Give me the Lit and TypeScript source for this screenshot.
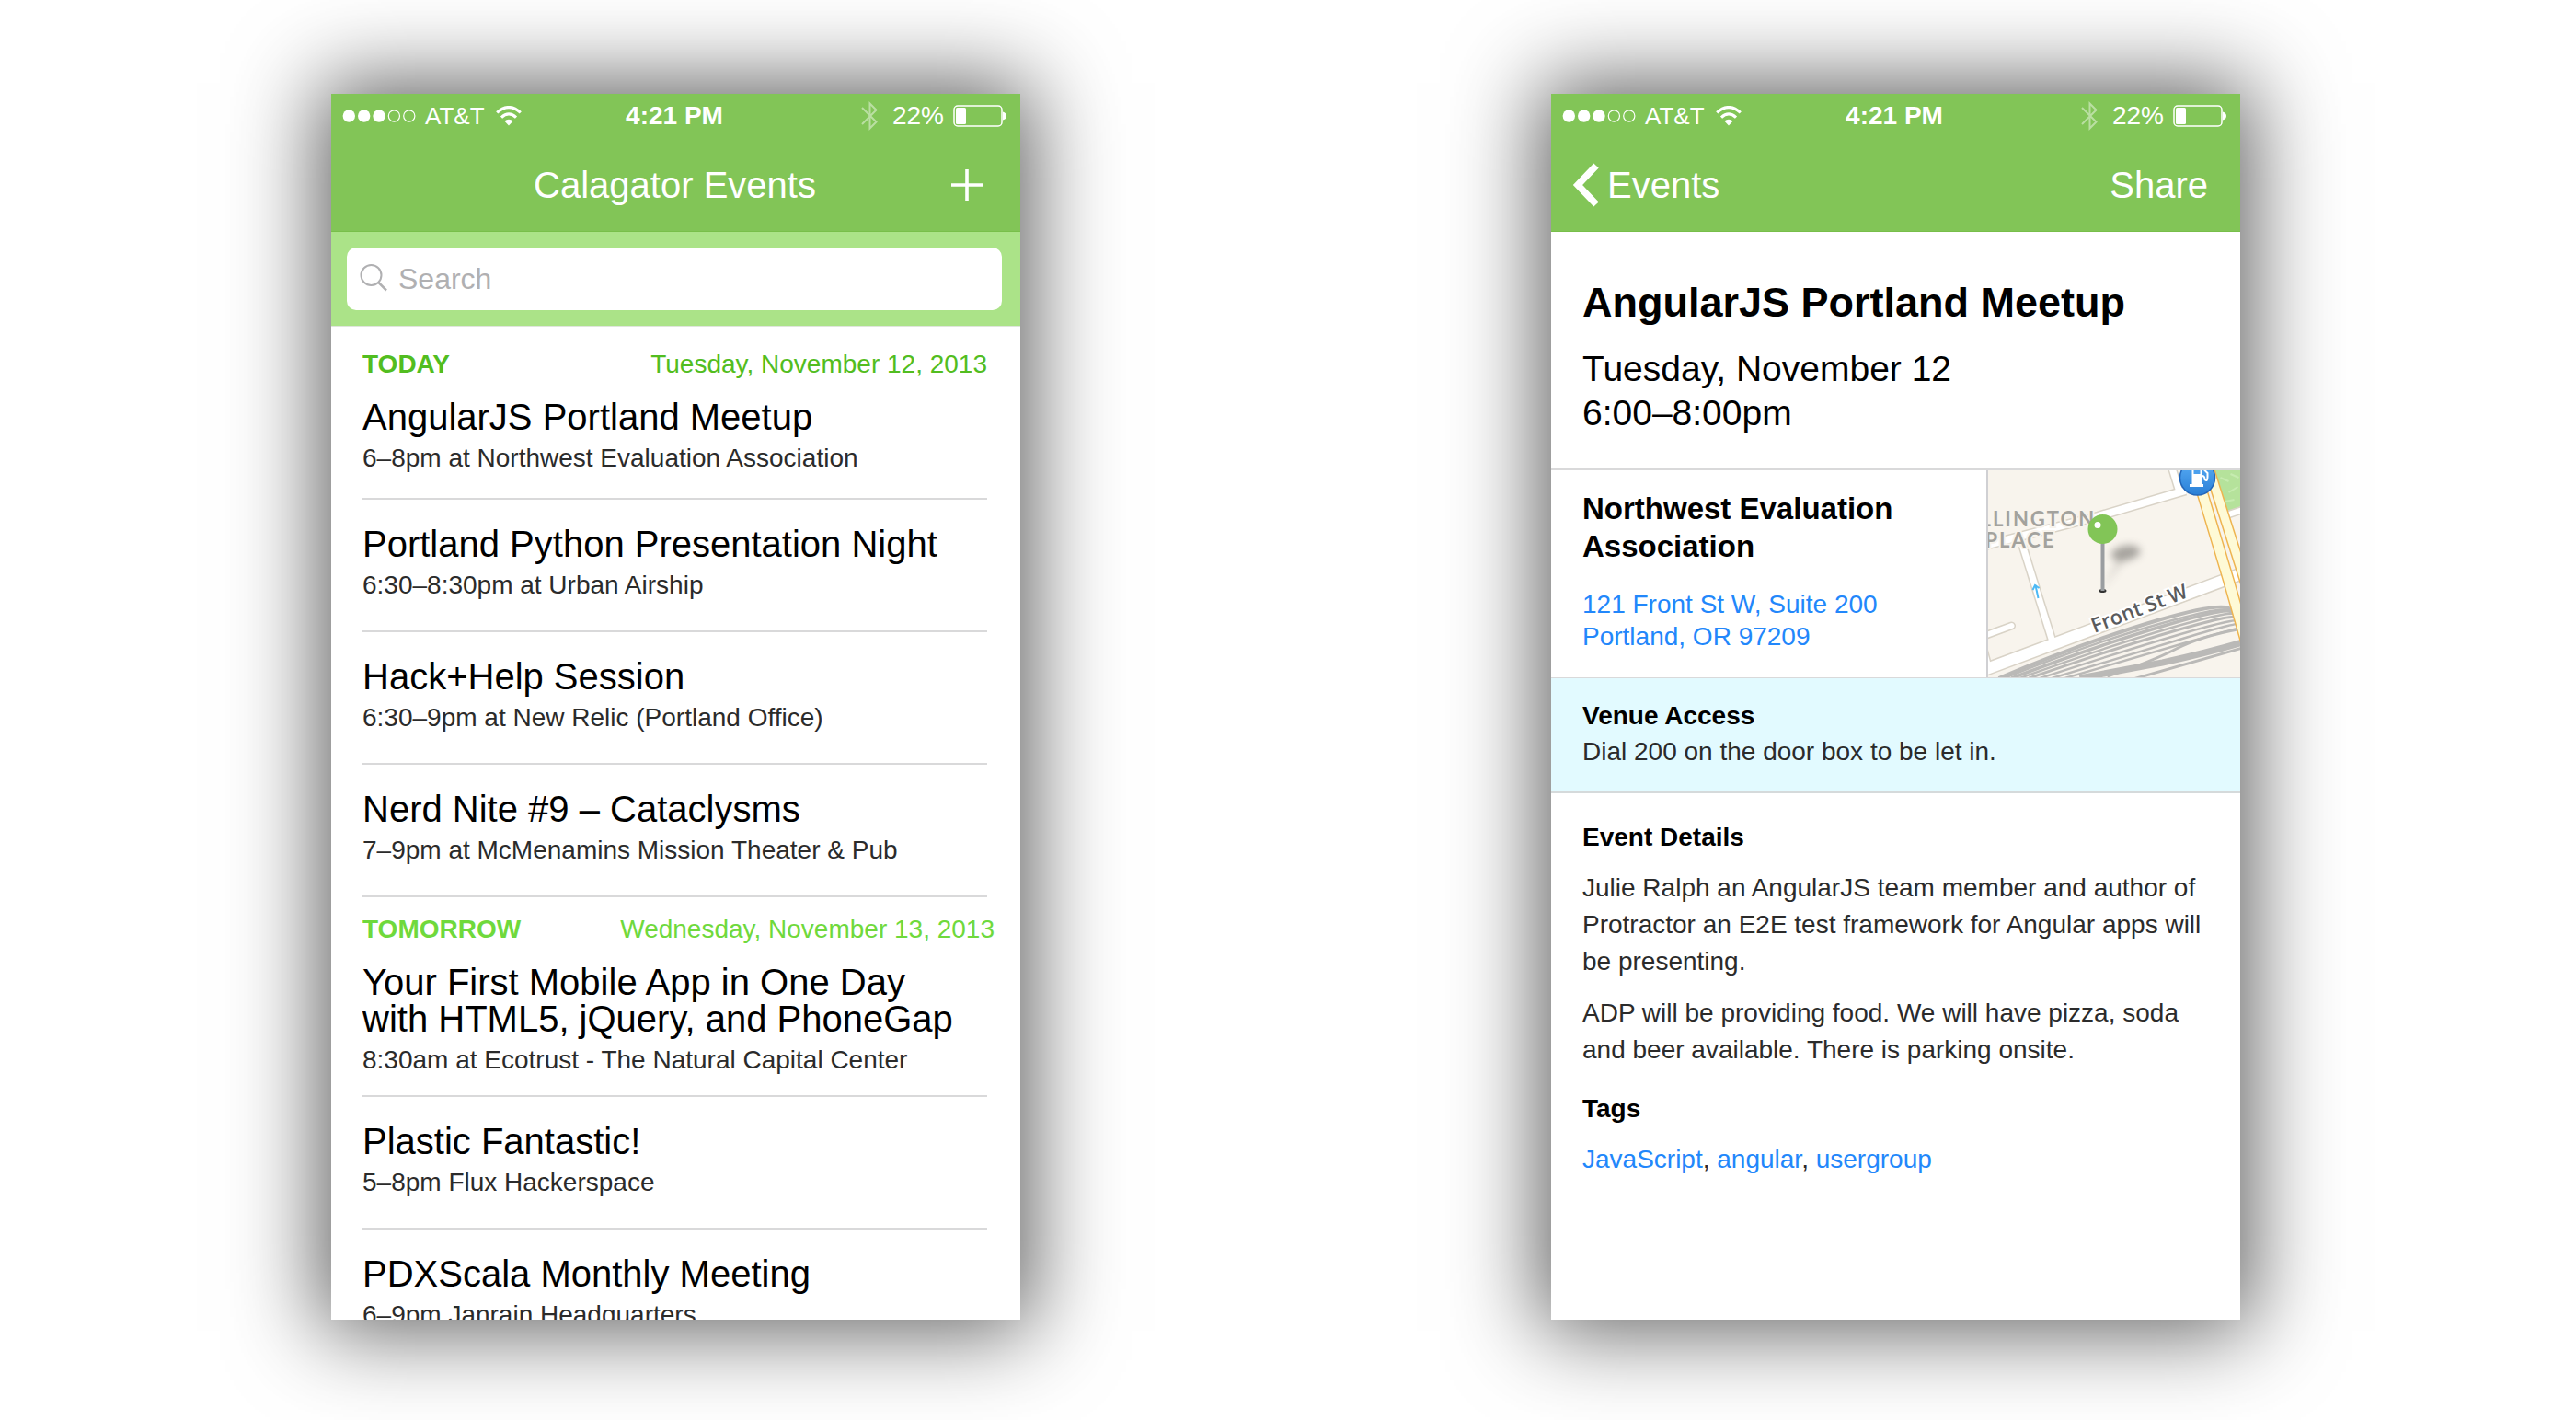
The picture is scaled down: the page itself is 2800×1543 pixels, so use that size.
import { LitElement, html, svg, css } from "lit";
import { customElement } from "lit/decorators.js";

interface EventItem {
  title: string[];
  meta: string;
}

interface Day {
  label: string;
  date: string;
  later: boolean;
  events: EventItem[];
}

const DAYS: Day[] = [
  {
    label: "TODAY",
    date: "Tuesday, November 12, 2013",
    later: false,
    events: [
      { title: ["AngularJS Portland Meetup"], meta: "6–8pm at Northwest Evaluation Association" },
      { title: ["Portland Python Presentation Night"], meta: "6:30–8:30pm at Urban Airship" },
      { title: ["Hack+Help Session"], meta: "6:30–9pm at New Relic (Portland Office)" },
      { title: ["Nerd Nite #9 – Cataclysms"], meta: "7–9pm at McMenamins Mission Theater & Pub" },
    ],
  },
  {
    label: "TOMORROW",
    date: "Wednesday, November 13, 2013",
    later: true,
    events: [
      {
        title: ["Your First Mobile App in One Day", "with HTML5, jQuery, and PhoneGap"],
        meta: "8:30am at Ecotrust - The Natural Capital Center",
      },
      { title: ["Plastic Fantastic!"], meta: "5–8pm Flux Hackerspace" },
      { title: ["PDXScala Monthly Meeting"], meta: "6–9pm Janrain Headquarters" },
    ],
  },
];

@customElement("status-bar")
class StatusBar extends LitElement {
  static styles = css`
    :host { display: block; color: #fff; }
    .bar { display: grid; grid-template-columns: 1fr auto 1fr; align-items: center; height: 48px; padding: 0 15px 0 12px; font-size: 26px; line-height: 32px; }
    .side { display: flex; align-items: center; gap: 10px; }
    .right { justify-content: flex-end; }
    .time { font-size: 28px; font-weight: 700; }
    .percent { font-size: 28px; }
    .bluetooth { margin-right: 6px; }
    svg { display: block; flex: none; }
  `;
  render() {
    return html`<div class="bar">
      <div class="side">
        <svg width="80" height="16" viewBox="0 0 80 16" fill="#fff" stroke="#fff">
          ${[7.3, 23.7, 40, 56.4, 72.8].map((x, i) =>
            i < 3 ? svg`<circle cx=${x} cy="8" r="6.7" stroke="none" />` : svg`<circle cx=${x} cy="8" r="6.1" fill="none" stroke-width="1.2" />`)}
        </svg>
        <span>AT&amp;T</span>
        <svg width="30" height="22" viewBox="0 0 30 22" fill="none" stroke="#fff" stroke-width="3.2">
          <path d="M3.200 7.400Q16-4.200 28.800 7.400" /><path d="M8 12.600Q16 5.200 24 12.600" />
          <path d="M16 21.500L11.300 16.600Q16 12.800 20.700 16.600Z" fill="#fff" stroke="none" />
        </svg>
      </div>
      <span class="time">4:21 PM</span>
      <div class="side right">
        <svg class="bluetooth" width="18" height="32" viewBox="0 0 18 32" fill="none" stroke="#fff" stroke-opacity=".45" stroke-width="2">
          <path d="M1 7L16.500 22.500 9.500 29.500V2.500L16.500 9.500 1 25" />
        </svg>
        <span class="percent">22%</span>
        <svg width="58" height="24" viewBox="0 0 58 24">
          <rect x="1" y="1" width="52" height="22" rx="4" fill="none" stroke="#fff" stroke-width="1.5" />
          <rect x="3" y="3" width="11" height="18" rx="1.5" fill="#fff" />
          <path d="M54 7.500Q58 8.500 58 12T54 16.500Z" fill="#fff" />
        </svg>
      </div>
    </div>`;
  }
}

@customElement("events-screen")
class EventsScreen extends LitElement {
  static styles = css`
    :host { display: block; }
    .top { background: #82c557; border-bottom: 1px solid #78bf4a; color: #fff; }
    .nav { display: grid; grid-template-columns: 1fr auto 1fr; align-items: center; height: 101px; padding: 0 38px 0 36px; box-sizing: border-box; }
    h1 { grid-column: 2; margin: 0; font-size: 40px; line-height: 48px; font-weight: 400; }
    .add { justify-self: end; border: 0; padding: 0; background: none; color: inherit; display: flex; }
    .search { background: #abe388; padding: 17px 20px 17px 17px; border-bottom: 1px solid #dfe5dc; }
    .field { display: flex; align-items: center; gap: 10px; background: #fff; border-radius: 10px; height: 68px; padding: 0 14px; }
    input { flex: 1; min-width: 0; border: 0; outline: 0; padding: 0; background: none; font: inherit; font-size: 32px; line-height: 40px; color: #333; }
    input::placeholder { color: #b0b0b2; opacity: 1; }
    .list { padding: 0 36px 0 34px; }
    .day { display: flex; justify-content: space-between; align-items: baseline; padding-top: 24px; line-height: 34px; color: #52bd20; white-space: nowrap; }
    .day.later { padding-top: 18px; color: #6fd93c; margin-right: -8px; }
    .day h2 { margin: 0; font-size: 28px; line-height: 34px; font-weight: 700; }
    .date { font-size: 28px; }
    .events { list-style: none; margin: 0; padding: 0; }
    .event { border-bottom: 2px solid #d9d9da; padding: 28px 0 29px; }
    .event.first { padding: 20px 0 23px; }
    .events.later .event.first { padding-bottom: 18px; }
    .title { margin: 0 0 5px; font-size: 40px; line-height: 40px; font-weight: 400; color: #000; white-space: nowrap; }
    .title span { display: block; }
    .meta { margin: 0; font-size: 28px; line-height: 40px; color: #2b2b2b; white-space: nowrap; }
    svg { display: block; flex: none; }
  `;
  render() {
    return html`
      <header class="top">
        <status-bar></status-bar>
        <div class="nav">
          <h1>Calagator Events</h1>
          <button class="add" aria-label="Add event">
            <svg width="40" height="40" viewBox="0 0 40 40" stroke="#fff" stroke-width="3.6"><path d="M20 3V37M3 20H37" /></svg>
          </button>
        </div>
      </header>
      <div class="search">
        <label class="field">
          <svg width="32" height="32" viewBox="0 0 32 32" fill="none" stroke="#b0b0b2" stroke-width="2"><circle cx="12.500" cy="12" r="11" /><path d="M20.500 20L29 28.500" stroke-width="2.500" /></svg>
          <input type="search" placeholder="Search" aria-label="Search" />
        </label>
      </div>
      <div class="list">
        ${DAYS.map((d) => html`
          <div class="day ${d.later ? "later" : ""}"><h2>${d.label}</h2><span class="date">${d.date}</span></div>
          <ul class="events ${d.later ? "later" : ""}">
            ${d.events.map((e, i) => html`<li class="event ${i === 0 ? "first" : ""}">
              <h3 class="title">${e.title.map((t) => html`<span>${t}</span>`)}</h3>
              <p class="meta">${e.meta}</p>
            </li>`)}
          </ul>`)}
      </div>`;
  }
}

@customElement("venue-map")
class VenueMap extends LitElement {
  static styles = css`
    :host { display: block; }
    svg { display: block; width: 100%; height: 100%; }
    .place { font: 700 22px Lato, sans-serif; letter-spacing: 2px; fill: #a3a29d; stroke: #f8f4ed; stroke-width: 4px; paint-order: stroke; }
    .street { font: 600 22px "Open Sans", sans-serif; fill: #5a5b5d; stroke: #fff; stroke-width: 4px; paint-order: stroke; }
  `;
  render() {
    // Each road is drawn twice: a wide casing first, the white surface over it.
    const roads: [string, number, string][] = [
      ["M-4 82L120 50 215 22", 8, "butt"],
      ["M200-4L208 22", 7, "butt"],
      ["M38 82L71 188", 7, "butt"],
      ["M-4 180L26 169", 6, "round"],
      ["M-4 190L2 212", 3, "butt"],
      ["M-4 217L130 167 277 112", 12, "butt"],
      ["M256 50L280 42", 6, "butt"],
    ];
    return html`<svg viewBox="0 0 275 225" preserveAspectRatio="xMidYMid slice" role="img" aria-label="Map of Front St W">
      <defs>
        <linearGradient id="fuel" x2="0" y2="1"><stop offset="0" stop-color="#5aaef6" /><stop offset="1" stop-color="#2a7fd6" /></linearGradient>
        <filter id="soft" x="-50%" y="-50%" width="200%" height="200%"><feGaussianBlur stdDeviation="4" /></filter>
      </defs>
      <rect width="275" height="225" fill="#f8f4ed" />
      <path d="M246-2H277V40L258 45Z" fill="#b5e29b" />
      <path d="M253 8L262 12M262 24L272 18M258 34L268 32M264 4L273 8" stroke="#c6ebb0" stroke-width="2" />
      <g fill="none" stroke="#bab9b7" stroke-width="2.400">
        <path d="M12 226Q110 185 185 163T265 152" stroke-width="4" />
        <path d="M18 226Q115 187 190 166T265 154" />
        <path d="M26 226Q120 190 195 168T265 156" stroke-width="3.500" />
        <path d="M35 226Q128 192 200 171T270 158" />
        <path d="M45 226Q136 194 205 174T270 161" stroke-width="3" />
        <path d="M57 226Q145 197 210 178T275 164" />
        <path d="M70 226Q155 200 215 182T275 167" />
        <path d="M84 226Q165 202 220 186T277 171" />
        <path d="M100 226L190 209Q240 198 277 187" stroke-width="7" />
        <path d="M130 224Q178 208 205 194T277 172" stroke-width="3" />
        <path d="M158 227L277 193" stroke-width="3" />
      </g>
      <g fill="none" stroke="#d9d3c7">
        ${roads.map(([d, w, cap]) => svg`<path d=${d} stroke-width=${w + 3} stroke-linecap=${cap} />`)}
      </g>
      <g fill="none" stroke="#fff">
        ${roads.map(([d, w, cap]) => svg`<path d=${d} stroke-width=${w} stroke-linecap=${cap} />`)}
      </g>
      <g fill="none">
        <path d="M226 0L262 120 282 190" stroke="#eeb450" stroke-width="13" /><path d="M240-4L268 84 282 128" stroke="#eeb450" stroke-width="12" />
        <path d="M226 0L262 120 282 190" stroke="#fefad6" stroke-width="10" /><path d="M240-4L268 84 282 128" stroke="#fefad6" stroke-width="9" />
      </g>
      <path d="M52 125L55 139M49 130L51.500 125 56 128" stroke="#4db9f5" stroke-width="2" fill="none" />
      <text class="place" x="-8" y="61">LLINGTON</text>
      <text class="place" x="-3" y="84">PLACE</text>
      <text class="street" transform="translate(116 177) rotate(-21)">Front St W</text>
      <circle cx="228" cy="8" r="19" fill="url(#fuel)" stroke="#2266ba" stroke-width="1.500" />
      <path d="M222-6H233V15H234.500V18H219.500V15H222Z" fill="#fff" />
      <rect x="224" y="0" width="7" height="4" fill="#4ba0ee" />
      <path d="M233 6Q236 6 236 10Q239 13 239 7V3L235-1" fill="none" stroke="#fff" stroke-width="2" />
      <g filter="url(#soft)" fill="#55534f" opacity=".5"><ellipse cx="150" cy="90" rx="16" ry="8" transform="rotate(-10 150 90)" /><path d="M125 129L143 95 148 98Z" opacity=".5" /></g>
      <ellipse cx="125" cy="131" rx="4" ry="2" fill="#333" />
      <path d="M125 78V131" stroke="#9a9da0" stroke-width="4" />
      <circle cx="125" cy="64" r="16" fill="#82c557" /><circle cx="119.500" cy="59.500" r="3.500" fill="#fff" />
    </svg>`;
  }
}

@customElement("detail-screen")
class DetailScreen extends LitElement {
  static styles = css`
    :host { display: block; color: #000; }
    .top { background: #82c557; border-bottom: 1px solid #78bf4a; color: #fff; }
    .nav { display: flex; justify-content: space-between; align-items: center; height: 101px; padding: 0 35px 0 23px; box-sizing: border-box; }
    .nav button, .nav a { display: flex; align-items: center; gap: 8px; border: 0; padding: 0; background: none; color: #fff; text-decoration: none; font: inherit; font-size: 40px; line-height: 48px; }
    svg { display: block; }
    h1, h2, p { margin: 0; }
    .head { padding: 52px 34px 36px; border-bottom: 2px solid #d9d9da; }
    h1 { font-size: 45px; line-height: 50px; font-weight: 700; }
    .when { margin-top: 23px; font-size: 39px; line-height: 48px; }
    .venue { display: grid; grid-template-columns: minmax(0, 1fr) 276px; border-bottom: 1px solid #d9d9da; }
    .info { padding: 21px 34px 22px; }
    .info h2 { font-size: 33px; line-height: 41px; }
    .address { display: block; margin-top: 25px; font-size: 28px; line-height: 35px; color: #2287fb; text-decoration: none; }
    .address span { display: block; }
    .map { border-left: 2px solid #d0d0d3; height: 225px; overflow: hidden; }
    .map venue-map { height: 100%; }
    .access { background: #e2faff; padding: 21px 34px 24px; border-bottom: 2px solid #d5dadb; font-size: 28px; line-height: 39px; color: #2b2b2b; }
    .access h2, .body h2 { font-size: 28px; line-height: 39px; font-weight: 700; color: #000; }
    .body { padding: 28px 34px; font-size: 28px; line-height: 40px; color: #2b2b2b; }
    .body p { margin: 16px 0; white-space: nowrap; }
    .body p span { display: block; }
    .body .tags-title { margin-top: 24px; }
    .tags a { color: #2287fb; text-decoration: none; }
  `;
  render() {
    return html`
      <header class="top">
        <status-bar></status-bar>
        <nav class="nav">
          <a href="#events"><svg width="30" height="50" viewBox="0 0 30 50" fill="none" stroke="#fff" stroke-width="7.5"><path d="M26 4L6 25 26 46" /></svg>Events</a>
          <button>Share</button>
        </nav>
      </header>
      <section class="head">
        <h1>AngularJS Portland Meetup</h1>
        <p class="when">Tuesday, November 12<br />6:00–8:00pm</p>
      </section>
      <section class="venue">
        <div class="info">
          <h2>Northwest Evaluation<br />Association</h2>
          <a class="address" href="#map"><span>121 Front St W, Suite 200</span><span>Portland, OR 97209</span></a>
        </div>
        <div class="map"><venue-map></venue-map></div>
      </section>
      <section class="access">
        <h2>Venue Access</h2>
        <p>Dial 200 on the door box to be let in.</p>
      </section>
      <section class="body">
        <h2>Event Details</h2>
        <p><span>Julie Ralph an AngularJS team member and author of</span><span>Protractor an E2E test framework for Angular apps will</span><span>be presenting.</span></p>
        <p><span>ADP will be providing food. We will have pizza, soda</span><span>and beer available. There is parking onsite.</span></p>
        <h2 class="tags-title">Tags</h2>
        <p class="tags"><a href="#javascript">JavaScript</a>, <a href="#angular">angular</a>, <a href="#usergroup">usergroup</a></p>
      </section>`;
  }
}

@customElement("app-root")
class AppRoot extends LitElement {
  static styles = css`
    :host { display: block; font-family: "Liberation Sans", Arial, sans-serif; }
    .stage { display: flex; justify-content: space-between; align-items: flex-start; gap: 80px; padding: 102px 365px 109px 360px; background: #fff; overflow: hidden; }
    .phone { flex: 0 1 749px; min-width: 0; aspect-ratio: 9 / 16; overflow: hidden; background: #fff; box-shadow: 0 0 90px 12px rgba(0, 0, 0, 0.63); }
  `;
  render() {
    return html`<main class="stage">
      <events-screen class="phone"></events-screen>
      <detail-screen class="phone"></detail-screen>
    </main>`;
  }
}
